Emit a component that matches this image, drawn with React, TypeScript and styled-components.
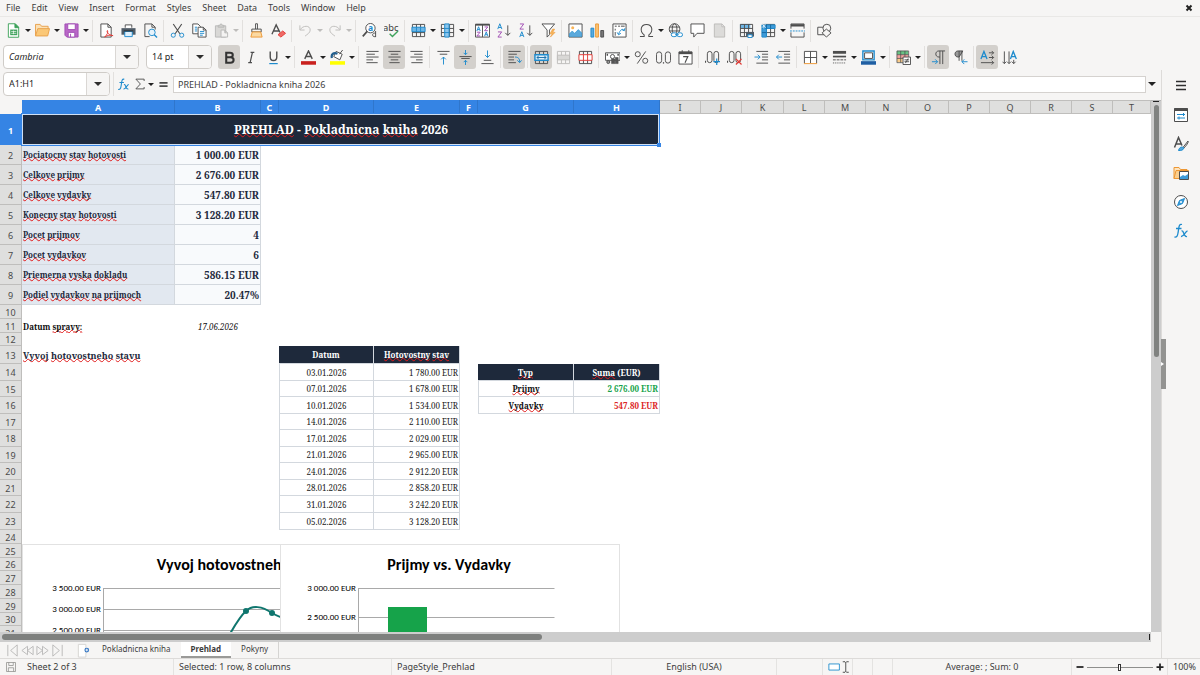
import React, { useState } from "react";
import styled, { createGlobalStyle, css } from "styled-components";

const ui = `"Noto Sans", "Open Sans", sans-serif`;
const cellFont = `"Noto Serif", "DejaVu Serif Condensed", "DejaVu Serif", serif`;

const c = {
  chrome: "#f6f5f4",
  line: "#dddbd9",
  text: "#3d3d3d",
  ink: "#4d4d4d",
  blue: "#1e8bcd",
  select: "#3584e4",
  navy: "#1e293b",
  red: "#e23b36",
  green: "#3fa35c",
  orange: "#ed9733",
  purple: "#a04db3",
};

const GlobalStyle = createGlobalStyle`
  *, *::before, *::after { box-sizing: border-box; }
  html, body { margin: 0; background: ${c.chrome}; }
  body { font: 9px/12px ${ui}; color: ${c.text}; }
  button, input { font: inherit; color: inherit; }
`;

/* ---------- icons ---------- */

const gridLines = <path d="M1.5 1.5h13v13h-13z M1.5 5.8h13 M1.5 10.2h13 M5.8 1.5v13 M10.2 1.5v13" />;

const icons: Record<string, React.ReactNode> = {
  newDoc: (
    <g>
      <path d="M2.500 .8h7.500l3.500 3.500v10.900h-11z" fill="#fff" stroke={c.green} />
      <path d="M9.500 1v4h4z" fill={c.green} stroke={c.green} />
      <path d="M4.500 7h7.500v6H4.500z" fill={c.green} stroke="none" />
      <path d="M5.500 9h5.500M5.500 11h5.500M8 8v4" stroke="#fff" strokeWidth=".7" />
    </g>
  ),
  open: (
    <g stroke="#e8a04a">
      <path d="M.5 13.500V1.500h5l1.500 2h7v3" fill="#fbe0b4" />
      <path d="M.5 13.800l2.500-7.800h12.500l-2 7.800z" fill="#fbc877" />
    </g>
  ),
  save: (
    <g stroke={c.purple}>
      <path d="M1 1h14v14H3l-2-2z" fill="#b967c7" />
      <path d="M4 1h8v6H4z" fill="#fff" />
      <path d="M4.500 10h7v5h-7z" fill="#fff" />
      <path d="M7 11.500v3.500" />
    </g>
  ),
  pdf: (
    <g>
      <path d="M2 1h7.500l3.500 3.500v10.500H2z M9.500 1v3.500H13" fill="#fff" />
      <path d="M6 15c3-3 4-5 3-7-1.500 2 2 5 6 5.500-3-1-6-.5-9 1.500z" stroke={c.red} />
    </g>
  ),
  print: (
    <g>
      <path d="M4.500 5V2h7v3" fill="#fff" />
      <path d="M.5 5.500h15v7H.5z" fill="#4f5b66" stroke="none" />
      <path d="M4 9h8v5.500H4z" fill="#dfeffb" stroke={c.blue} />
      <path d="M3 8.500h10" stroke="#222" />
    </g>
  ),
  preview: (
    <g>
      <path d="M7 14.500H2V1h7.500L13 4.500V7 M9.500 1v3.500H13" />
      <circle cx="9.500" cy="10" r="3.500" stroke={c.blue} fill="#e7f3fb" />
      <path d="M12 12.500l3 3" stroke={c.blue} strokeWidth="1.400" />
    </g>
  ),
  cut: (
    <g>
      <path d="M3.500 1l7 10.500M12.500 1l-7 10.500" strokeWidth="1.200" />
      <circle cx="3.500" cy="13" r="2.200" stroke={c.blue} />
      <circle cx="12.500" cy="13" r="2.200" stroke={c.blue} />
    </g>
  ),
  copy: (
    <g>
      <path d="M.8 1h5.500l3 3v7.500H.8z" fill="#fff" />
      <path d="M3 4.500h2.500M3 6.500h2.500M3 8.500h2.500" stroke={c.blue} />
      <path d="M6.500 4.500h5.500l3 3v7.500H6.500z M12 4.500v3h3" fill="#fff" />
      <path d="M8.500 9h4.500M8.500 11h4.500M8.500 13h3" stroke={c.blue} />
    </g>
  ),
  paste: (
    <g stroke="#b9b9b7">
      <path d="M1.500 3h11v12h-11z" fill="#d9d8d6" />
      <path d="M4.500 4.500v-2h1.500l1-1.500h1l1 1.500h1.500v2z" fill="#cfcecc" />
      <path d="M7.500 7.500h4l3 3v4.500h-7z M11.500 7.500v3h3" fill="#f4f3f2" />
    </g>
  ),
  clone: (
    <g>
      <path d="M7 .8h2v6H7z" fill="#fff" />
      <path d="M3 6.500h10v3H3z" fill="#f6f5f4" />
      <path d="M3.500 9.500h9l1.500 5.500H2z" fill="#fbd9a2" stroke={c.orange} />
    </g>
  ),
  clear: (
    <g>
      <path d="M1 12L5.500 2l4 8M3 8.500h5.500" strokeWidth="1.400" />
      <path d="M7.500 12.500l5-4 3 2.500-5 4z" fill="#ef6a66" stroke={c.red} />
    </g>
  ),
  undo: <path d="M2 2.500v5h5 M2.500 7C5 2.500 13 2 13 7.500c0 3-3 4.500-5.500 6.500" stroke="#bebdbb" />,
  redo: <path d="M14 2.500v5H9 M13.500 7C11 2.500 3 2 3 7.500c0 3 3 4.500 5.500 6.500" stroke="#bebdbb" />,
  find: (
    <g>
      <circle cx="9" cy="5.500" r="5" fill="#fff" />
      <path d="M5.500 9L.8 14.200" strokeWidth="1.800" />
      <text x="6.300" y="8.500" fontSize="9" fontWeight="700" fill={c.blue} stroke="none">a</text>
      <path d="M14.500 8.500v6.500m0-4c-4-1.500-4.500 4.500 0 3.500" />
    </g>
  ),
  spell: (
    <g>
      <text x="-1" y="8" fontSize="10" fill="#3d3d3d" stroke="none">abc</text>
      <path d="M6 11.500l3 3 6-6" stroke={c.green} strokeWidth="1.500" />
    </g>
  ),
  row: (
    <g>
      {gridLines}
      <path d="M1 4.500h14v4.700H1z" fill="#6eb6e6" stroke={c.blue} />
      <path d="M5.800 4.500v4.700M10.200 4.500v4.700" stroke={c.blue} />
    </g>
  ),
  column: (
    <g>
      {gridLines}
      <path d="M5 1h4.700v14H5z" fill="#8cc6ec" stroke={c.blue} />
      <path d="M5 5.800h4.700M5 10.200h4.700" stroke={c.blue} />
    </g>
  ),
  sort: (
    <g>
      <path d="M.5 1.500h15v13.500H.5z M8 1.500v13.500" fill="#fff" />
      <path d="M.5 1.800h15" strokeWidth="2" />
      <path d="M2 8.500l1.800-4.500 1.800 4.500M2.700 7h2.200M10.200 14l1.800-4.500 1.800 4.500M11 12.500h2" stroke={c.blue} />
      <path d="M2 9.800h3.500L2 13.800h3.500M10.200 4.200h3.500l-3.500 4h3.500" stroke={c.purple} />
    </g>
  ),
  ascending: (
    <g>
      <path d="M.8 6.500L3 .8l2.200 5.700M1.600 4.800h2.800" stroke={c.blue} />
      <path d="M1 9.500h4l-4 5.500h4" stroke={c.purple} />
      <path d="M11.500 2.500v10.500M8.800 10.500l2.700 2.700 2.700-2.700" />
    </g>
  ),
  descending: (
    <g>
      <path d="M1 1h4L1 6.500h4" stroke={c.purple} />
      <path d="M.8 15L3 9.300 5.200 15M1.600 13.200h2.800" stroke={c.blue} />
      <path d="M11.500 2.500v10.500M8.800 10.500l2.700 2.700 2.700-2.700" />
    </g>
  ),
  filter: (
    <g>
      <path d="M1 1h13.500L9 7.500v5L6.500 15V7.500z" fill="#fff" />
      <path d="M12.500 6.500l-3 5h2.500l-2 3.500 5-5h-2.500l2-3.500z" fill="#f7b65c" stroke={c.orange} strokeWidth=".6" />
    </g>
  ),
  image: (
    <g>
      <path d="M1 1h14v14H1z" fill="#fff" />
      <circle cx="5" cy="5" r="1.600" fill="#f9b457" stroke="none" />
      <path d="M1.500 14.500v-3l3-3 2.500 2.500L11 7l3.500 3.500v4z" fill="#5aa9dc" stroke={c.blue} strokeWidth=".6" />
    </g>
  ),
  chart: (
    <g>
      <path d="M1 5.500h3v9.500H1z" fill="#5aa9dc" stroke={c.blue} />
      <path d="M6 1h3v14H6z" fill="#f9c476" stroke={c.orange} />
      <path d="M11.500 8h3v7h-3z" fill="#777" />
    </g>
  ),
  pivot: (
    <g>
      <path d="M1 1h14v14H1z" fill="#fff" />
      <path d="M3 3.500h2M6.500 3.500h2M9.500 3.500h4M3.500 6v2M3.500 9.500v4" stroke="#8a8a8a" strokeWidth="1.500" />
      <path d="M13 8C12 6 9 6 7 12M10.500 7L13 8.300 13.800 5.500M5.500 10L7 12.500 9.500 11" stroke={c.blue} />
    </g>
  ),
  omega: <path d="M1 14.500h4.500v-1.800C.5 9 1.500 1.500 8 1.500s7.500 7.500 2.500 11.200v1.800H15" strokeWidth="1.100" />,
  link: (
    <g>
      <circle cx="7" cy="6.500" r="5.700" />
      <ellipse cx="7" cy="6.500" rx="2.500" ry="5.700" />
      <path d="M2 4.300h10M1.500 8.500h11" />
      <rect x="3.500" y="10.500" width="6" height="4" rx="2" stroke={c.blue} fill="#fff" />
      <rect x="9.500" y="10.500" width="6" height="4" rx="2" stroke={c.blue} fill="#fff" />
      <path d="M7.500 12.500h4" stroke={c.blue} />
    </g>
  ),
  comment: <path d="M1 1h14v10H7.500L4 15v-4H1z" fill="#fff" />,
  headers: <path d="M2.500 1h8l3 3v11h-11z M10.500 1v3h3" fill="#dcdbd9" stroke="#bcbbb9" />,
  printArea: (
    <g>
      <path d="M1 1h11v5H1z" fill="#6eb6e6" stroke="none" />
      {gridLines}
      <path d="M7.500 9.500h8.500v5H7.500z" fill="#4f5b66" stroke="none" />
      <path d="M9.500 12.500h4.500v3H9.500z" fill="#fff" stroke={c.blue} />
    </g>
  ),
  freeze: (
    <g>
      {gridLines}
      <path d="M1 2h14v3.800H1z M1 5.800h4.800V15H1z" fill="#3f9bd8" stroke={c.blue} />
      <path d="M5.800 2v4M10.200 2v4M1 10.200h4.800" stroke="#1666a0" />
      <path d="M1 1l4 4M5 1L1 5M3 0v6" stroke="#fff" strokeWidth=".7" />
    </g>
  ),
  split: (
    <g>
      <path d="M1 6V1h14v5M1 10v5h14v-5" />
      <path d="M1 2.500h14" strokeWidth="2.500" />
      <path d="M0 8.500h16" stroke={c.blue} strokeDasharray="2 1" />
    </g>
  ),
  shapes: (
    <g>
      <path d="M.8 4.500h8v8h-8z" />
      <circle cx="10.500" cy="5.500" r="4.200" fill="#f6f5f4" />
      <path d="M10 6.500l5 4-5 4.500-4.500-4.500z" fill="#f6f5f4" />
    </g>
  ),
  bold: <path d="M4.500 3h4c4 0 4 4.800 0 4.800h-4zM4.500 7.800h4.500c4.500 0 4.500 5.700 0 5.700H4.500z" stroke="#333" strokeWidth="2.200" />,
  italic: <path d="M7 2.500h4M4.500 13.500h4M9 2.500L6.500 13.500" strokeWidth="1.300" />,
  underline: (
    <g>
      <path d="M4.500 1.500v6c0 5 7 5 7 0v-6" strokeWidth="1.500" />
      <path d="M3.500 14.500h9" stroke={c.blue} strokeWidth="1.300" />
    </g>
  ),
  fontColor: (
    <g>
      <path d="M4 9.500L8 1l4 8.500M5.500 7h5" strokeWidth="1.500" />
      <path d="M0 13.800h16" stroke="#c9211e" strokeWidth="3.800" />
    </g>
  ),
  fill: (
    <g>
      <path d="M6.500 1.500l6.500 3-2.500 6-6.500-3.500z" fill="#fff" />
      <path d="M2 8.500C1 4 4 2.500 8 4" stroke="#235f8e" strokeWidth="2.400" />
      <path d="M13.500 0L10 4.500" />
      <path d="M0 13.800h16" stroke="#ffff00" strokeWidth="3.800" />
    </g>
  ),
  left: <path d="M1.500 1.500h13M1.500 4.500h9M1.500 7.500h13M1.500 10.500h7M1.500 13.500h12" />,
  center: <path d="M1.500 1.500h13M4 4.500h8M1.500 7.500h13M4 10.500h8M2.500 13.500h11" />,
  right: <path d="M1.500 1.500h13M5.500 4.500h9M1.500 7.500h13M7.500 10.500h7M2.500 13.500h12" />,
  top: (
    <g>
      <path d="M1.500 1.500h13M4 4.500h8" />
      <path d="M8 15.500v-8M5.500 10L8 7.500l2.500 2.500" stroke={c.blue} />
    </g>
  ),
  middle: (
    <g>
      <path d="M1.500 7h13M3.500 9h9" />
      <path d="M8 0v5M6 3l2 2 2-2M8 16v-5M6 13l2-2 2 2" stroke={c.blue} />
    </g>
  ),
  bottom: (
    <g>
      <path d="M1.500 14.500h13M4 11h8" />
      <path d="M8 .5v7.500M5.500 5.500L8 8l2.500-2.500" stroke={c.blue} />
    </g>
  ),
  wrap: (
    <g>
      <path d="M1.500 1.500h13M1.500 4.500h9M1.500 7.500h6M1.500 10.500h6M1.500 13.500h8" />
      <path d="M8.500 7.500c4 0 5 2 5 5.500M11 11l2.500 2.500L15.500 11" stroke={c.blue} />
    </g>
  ),
  merge: (
    <g>
      {gridLines}
      <path d="M1 5h14v6H1z" fill="#dff0fb" stroke={c.blue} strokeWidth="1.500" />
      <path d="M3 8h10M5 6.500L3 8l2 1.500M11 6.500L13 8l-2 1.500" stroke="#1a6ea6" />
    </g>
  ),
  merge2: (
    <g stroke="#bebdbb">
      <path d="M1.500 1.500h13v13h-13z M5.800 1.500v4M10.200 1.500v4M5.800 10.500v4M10.200 10.500v4" />
      <path d="M1.500 5.500h13v5h-13z" fill="#d9d8d6" />
    </g>
  ),
  unmerge: (
    <g>
      {gridLines}
      <path d="M1 5h14v6H1z M5.800 5v6M10.200 5v6" fill="#fff" stroke={c.red} />
    </g>
  ),
  currency: (
    <g>
      <path d="M.5 3h15.500v8H.5z" fill="#fff" />
      <circle cx="8" cy="7" r="2.200" />
      <path d="M2.500 4v2M14 4v2" strokeWidth="1.500" />
      <path d="M7 9.500h3.500v5H7z M11 8h3v6.500h-3z" fill="#555" strokeWidth=".6" />
      <circle cx="3.500" cy="12.800" r="1.600" fill="#999" />
    </g>
  ),
  percent: (
    <g>
      <circle cx="4" cy="4.500" r="2.700" />
      <circle cx="12" cy="11.500" r="2.700" />
      <path d="M12.500 1.500l-9 13" />
    </g>
  ),
  number: (
    <g>
      <rect x=".5" y="2" width="5.500" height="12" rx="2.700" />
      <rect x="10" y="2" width="5.500" height="12" rx="2.700" />
      <path d="M8 13v1.500" strokeWidth="1.300" />
    </g>
  ),
  date: (
    <g>
      <path d="M1 2h14v13H1z" fill="#fff" />
      <path d="M1 3.200h14" strokeWidth="2.500" />
      <path d="M4.500 .2v3M11.500 .2v3" />
      <path d="M5.500 7h5l-3 6.500" strokeWidth="1.200" />
    </g>
  ),
  addDecimal: (
    <g>
      <path d="M.5 11.500v2" strokeWidth="1.300" />
      <rect x="2.500" y="1.500" width="5" height="12" rx="2.500" />
      <rect x="9.500" y="1.500" width="5" height="12" rx="2.500" />
      <path d="M9 12.500h7M12.500 9v7" stroke={c.blue} strokeWidth="1.300" />
    </g>
  ),
  deleteDecimal: (
    <g>
      <path d="M.5 11.500v2" strokeWidth="1.300" />
      <rect x="2.500" y="1.500" width="5" height="12" rx="2.500" />
      <rect x="9.500" y="1.500" width="5" height="12" rx="2.500" />
      <path d="M9.500 9.500l6 6M15.500 9.500l-6 6" stroke={c.red} strokeWidth="1.300" />
    </g>
  ),
  indent: (
    <g>
      <path d="M2.500 1.500h12.500M8.500 4.500h6.500M8.500 7.500h6.500M8.500 10.500h6.500M2.500 14h12.500" />
      <path d="M.5 7.500h6M4 5l2.500 2.500L4 10" stroke={c.blue} />
    </g>
  ),
  outdent: (
    <g>
      <path d="M2.500 1.500h12.500M8.500 4.500h6.500M8.500 7.500h6.500M8.500 10.500h6.500M2.500 14h12.500" />
      <path d="M.5 7.500h6M3 5L.5 7.500 3 10" stroke={c.blue} />
    </g>
  ),
  borders: (
    <g>
      <path d="M1.500 14V1.500h13V14M8 1.500V14M1.500 8h13" fill="#fff" />
      <path d="M1 14.500h14" stroke={c.orange} />
    </g>
  ),
  borderStyle: (
    <g>
      <path d="M1 2.500h14" strokeWidth="3" />
      <path d="M1 7h14" strokeWidth="1.800" />
      <path d="M1 10.500h14" strokeDasharray="3 1" />
      <path d="M1 13.800h14" strokeDasharray="1 1" />
    </g>
  ),
  borderColor: (
    <g>
      <path d="M2 1h12v9.500H2z" fill="#fff" stroke={c.blue} strokeWidth="1.500" />
      <path d="M3.800 3h8.500v6H3.800z" />
      <path d="M0 13.800h16" stroke="#1f5fa3" strokeWidth="3.800" />
    </g>
  ),
  conditional: (
    <g>
      <path d="M1 1h12v4H1z" fill="#67c283" stroke="none" />
      <path d="M1 5h12v4H1z" fill="#f4a3a0" stroke="none" />
      <path d="M1 9h6v4H1z" fill="#fbcd8a" stroke="none" />
      <path d="M1 1h12.500v12.500H1z M5 1v12.500M9.500 1v12.500M1 5h12.500M1 9h12.500" strokeWidth=".8" />
      <path d="M7.500 7.500h8v8h-8z" fill="#fff" />
      <path d="M9 10.500h5M9 12.500h5M13 9l-3 5" />
    </g>
  ),
  ltr: (
    <g>
      <path d="M15 1H8.500c-4.500 0-4.500 6.500 0 6.500h1" />
      <path d="M9.500 1v14M12.500 1v14" />
      <path d="M1 12.500h6M4.500 10L7 12.500 4.500 15" stroke={c.blue} />
    </g>
  ),
  rtl: (
    <g>
      <path d="M10.500 1H5.500c-4.500 0-4.500 6.500 0 6.500h1z" fill="#999" />
      <path d="M6.500 1v10.500M9.500 1v10.500" />
      <path d="M15.500 12.500h-6M12 10l-2.500 2.500L12 15" stroke={c.blue} />
    </g>
  ),
  textHorizontal: (
    <g>
      <path d="M1 9.500L4.200 1.500 7.500 9.500M2.500 7h3.500" stroke={c.blue} strokeWidth="1.400" />
      <path d="M9.500 3h5M9.500 8h5M1 13.500h13.500M12.500 1l2 2-2 2M12.500 6l2 2-2 2M12.500 11.500l2 2-2 2" />
    </g>
  ),
  textVertical: (
    <g>
      <path d="M9 9.500L12 1.500l3.300 8M10.300 7h3.500" stroke={c.blue} strokeWidth="1.400" />
      <path d="M2.500 1.500v13M7.500 1.500v13M12.500 10.500v4M.5 12.500l2 2 2-2M5.500 12.500l2 2 2-2M10.500 12.500l2 2 2-2" />
    </g>
  ),
  properties: (
    <g>
      <path d="M1.500 1.500h13v13h-13z" fill="#fff" />
      <path d="M1.500 2.500h13" strokeWidth="3" />
      <path d="M4 7.500h8M10.500 6v3" stroke={c.blue} />
      <path d="M4 11h8M6 9.500v3" stroke={c.blue} />
    </g>
  ),
  styles: (
    <g>
      <path d="M1.500 11.500L5.500 1.500l3.500 8M3 8h5" strokeWidth="1.500" />
      <path d="M15 5L10 11.500M15 5c1 1-2 5-4 7" />
      <path d="M5.500 14.500c1-4 4-4 5.500-2.500-1 2.500-3 2.500-5.500 2.500z" fill="#5aa9dc" stroke={c.blue} />
    </g>
  ),
  gallery: (
    <g>
      <path d="M1 13.500V2.500h5l1.500 2H14v2" fill="#fde3bd" stroke={c.orange} />
      <path d="M1 13.500l2-8h12.500l-1 8z" fill="#fbcf8f" stroke={c.orange} />
      <path d="M6.500 6.500h9v8h-9z" fill="#fff" />
      <path d="M7 14v-2l3-2 2 1 3-2v5z" fill="#3f9bd8" stroke="none" />
    </g>
  ),
  navigator: (
    <g>
      <circle cx="8" cy="8" r="6.500" fill="#fff" />
      <path d="M11.500 4.500L9.500 9.500l-5 2L6.500 6.500z" fill="#3f9bd8" stroke={c.blue} />
      <circle cx="8" cy="8" r="1" fill="#fff" stroke="none" />
    </g>
  ),
  fx: (
    <g stroke={c.blue} strokeWidth="1.300">
      <path d="M9 1.500C5.500 .5 6 5 5 10c-.4 2.500-1 4.500-3.500 4M3 5.500h5.500" />
      <path d="M8.500 8c2.500-1 2 6.500 5.500 5.500M14.500 8c-2 0-4 6-6.500 5.500" />
    </g>
  ),
  sigma: <path d="M13.500 4V1.500h-11l6 6.500-6 6.500h11V12" strokeWidth="1.200" />,
  equals: <path d="M3 6h10M3 10h10" strokeWidth="1.900" />,
  menu: <path d="M3 3.500h10M3 7.500h10M3 11.500h10" strokeWidth="1.500" stroke="#2e2e2e" />,
  close: <path d="M5.500 5.500l5 5M10.500 5.500l-5 5" strokeWidth="2" stroke="#222" />,
  disk: <path d="M2 2h12v12H2z M5 2v4h6V2 M4.500 14V9h7v5" stroke="#8d8d8b" />,
  addSheet: (
    <g>
      <path d="M2.500 1.500V15h8V1.500z" fill="#fff" stroke="#d5d4d2" />
      <circle cx="11.500" cy="7.500" r="2.500" fill="#2a6fc0" stroke="none" />
      <path d="M11.500 6v3M10 7.500h3" stroke="#fff" />
    </g>
  ),
  selectionMode: <path d="M1 4.500h12v7H1z" stroke={c.blue} fill="#fff" />,
  cursor: <path d="M1 1h3l1 1 1-1h3M1 15h3l1-1 1 1h3M5 2v12" stroke="#222" />,
  minus: <path d="M4 8h8" strokeWidth="2" stroke="#222" />,
  plus: <path d="M4 8h8M8 4v8" strokeWidth="2" stroke="#222" />,
  first: <path d="M3 2v12M13 2L6 8l7 6z" />,
  previous: <path d="M8 3.500L2 8l6 4.500zM14 3.500L8 8l6 4.500z" />,
  next: <path d="M2 3.500L8 8l-6 4.500zM8 3.500L14 8l-6 4.500z" />,
  last: <path d="M13 2v12M3 2l7 6-7 6z" />,
};

const Svg = styled.svg<{ $size: number }>`
  display: block;
  flex: none;
  width: ${(p) => p.$size}px;
  height: ${(p) => p.$size}px;
  fill: none;
  stroke: ${c.ink};
  stroke-width: 1;
`;

const Icon = ({ name, size = 15 }: { name: string; size?: number }) => (
  <Svg viewBox="0 0 16 16" $size={size} aria-hidden="true">
    {icons[name]}
  </Svg>
);

/* ---------- window chrome ---------- */

const Window = styled.div`
  display: flex;
  flex-direction: column;
  height: 100vh;
  overflow: hidden;
  background: ${c.chrome};
`;

const bareButton = css`
  padding: 0;
  border: 0;
  background: none;
`;

const MenuBar = styled.nav`
  display: flex;
  align-items: center;
  flex: none;
  gap: 11px;
  height: 17px;
  padding: 0 3px 0 6px;
  border-bottom: 1px solid #e9e8e6;
`;

const MenuItem = styled.button`
  ${bareButton}
  font-size: 9px;
  line-height: 16px;
`;

const CloseButton = styled.button`
  ${bareButton}
  margin-left: auto;
`;

const Toolbar = styled.div<{ $height: number }>`
  display: flex;
  align-items: center;
  flex: none;
  height: ${(p) => p.$height}px;
  padding: 0 2px;
`;

const ToolButton = styled.button<{ $on?: boolean }>`
  ${bareButton}
  display: flex;
  align-items: center;
  justify-content: center;
  flex: none;
  width: 22px;
  height: 24px;
  border-radius: 3px;
  background: ${(p) => (p.$on ? "#d3d0cc" : "transparent")};
`;

const DropButton = styled.button<{ $muted?: boolean }>`
  ${bareButton}
  display: flex;
  align-items: center;
  justify-content: center;
  flex: none;
  width: 7px;
  height: 22px;
  &::before {
    content: "";
    border: 3px solid transparent;
    border-top-color: ${(p) => (p.$muted ? "#bebdbb" : "#222")};
    border-bottom: 0;
  }
`;

const Separator = styled.span<{ $wide?: boolean }>`
  flex: none;
  width: 1px;
  height: 22px;
  margin: 0 2px 0 ${(p) => (p.$wide ? 3 : 2)}px;
  background: #e2e0de;
`;

const Combo = styled.div<{ $width: number }>`
  display: flex;
  flex: none;
  width: ${(p) => p.$width}px;
  height: 24px;
  overflow: hidden;
  border: 1px solid #cfccc8;
  border-radius: 4px;
  background: #fff;
`;

const ComboInput = styled.input<{ $italic?: boolean }>`
  flex: 1;
  min-width: 0;
  padding: 0 5px;
  border: 0;
  outline: 0;
  background: none;
  color: #1f1f1f;
  font-size: 9px;
  font-style: ${(p) => (p.$italic ? "italic" : "normal")};
`;

const ComboArrow = styled.button`
  ${bareButton}
  display: flex;
  align-items: center;
  justify-content: center;
  width: 23px;
  border-left: 1px solid #dad7d4;
  background: ${c.chrome};
  &::before {
    content: "";
    border: 4px solid transparent;
    border-top-color: #2e2e2e;
    border-bottom: 0;
  }
`;

const FormatBar = styled(Toolbar)`
  padding: 0 3px;
`;

const ComboGroup = styled.div`
  display: flex;
  gap: 7px;
  margin-right: 6px;
`;

const Body = styled.div`
  display: flex;
  flex: 1;
  min-height: 0;
`;

const Main = styled.main`
  display: flex;
  flex-direction: column;
  flex: 1;
  min-width: 0;
`;

const FormulaBar = styled.div`
  display: flex;
  align-items: center;
  flex: none;
  height: 30px;
  padding: 0 3px 2px;
`;

const FormulaInput = styled.input`
  flex: 1;
  min-width: 0;
  height: 17px;
  margin: 0;
  padding: 0 4px;
  border: 1px solid #d5d2cf;
  outline: 0;
  background: #fff;
  font-size: 9px;
`;

const FormulaTools = styled.div`
  display: flex;
  align-items: center;
  margin-left: 3px;
  border-left: 1px solid #e2e0de;
`;

const FormulaButton = styled(ToolButton)<{ $narrow?: boolean }>`
  width: ${(p) => (p.$narrow ? 14 : 19)}px;
`;

const ExpandButton = styled(DropButton)`
  width: 12px;
  &::before { border-width: 4px 4px 0; }
`;

/* ---------- sheet ---------- */

const SheetArea = styled.div`
  display: flex;
  flex: 1;
  min-height: 0;
`;

const Viewport = styled.div`
  position: relative;
  flex: 1;
  min-width: 0;
  overflow: hidden;
  background: #fff;
`;

const Grid = styled.table`
  width: 100%;
  table-layout: fixed;
  border-spacing: 0;
  border-collapse: separate;
`;

const Row = styled.tr<{ $height: number }>`
  height: ${(p) => p.$height}px;
`;

const Corner = styled.td`
  padding: 0;
  background: ${c.chrome};
`;

const Heading = styled.th<{ $on?: boolean; $row?: boolean }>`
  padding: ${(p) => (p.$row ? "1px 0 0" : 0)};
  border: 0 solid ${(p) => (p.$on ? "#2f76cc" : "#bfbebc")};
  border-right-width: 1px;
  border-bottom-width: ${(p) => (p.$on ? 0 : 1)}px;
  border-top-width: ${(p) => (p.$on || p.$row ? 0 : 1)}px;
  background: ${(p) => (p.$on ? c.select : "#dfdfde")};
  color: ${(p) => (p.$on ? "#fff" : "#4a4a4a")};
  font-size: 9px;
  font-weight: ${(p) => (p.$on ? 700 : 400)};
  line-height: 11px;
  text-align: center;
`;

type Kind =
  | "empty" | "title" | "label" | "value" | "note" | "date" | "section"
  | "head" | "day" | "amount" | "type" | "income" | "expense";

const box = css`
  border-right: 1px solid #d3d8de;
  border-bottom: 1px solid #d3d8de;
`;

const kinds: Record<Kind, ReturnType<typeof css> | string> = {
  empty: "",
  title: css`
    position: relative;
    overflow: visible;
    background: ${c.navy};
    color: #fff;
    font-size: 12px;
    font-weight: 700;
    text-align: center;
    &::before {
      content: "";
      position: absolute;
      inset: -1px 0 -1px -1px;
      border: 1px solid ${c.select};
      box-shadow: inset 0 0 0 1px #cfe0f5;
    }
    &::after {
      content: "";
      position: absolute;
      right: -1px;
      bottom: -2px;
      width: 4px;
      height: 4px;
      background: ${c.select};
    }
  `,
  label: css`
    ${box}
    background: #e2e8f0;
    color: ${c.navy};
    font-weight: 700;
  `,
  value: css`
    ${box}
    background: #f8fafc;
    color: ${c.navy};
    font-size: 10px;
    font-weight: 700;
    text-align: right;
  `,
  note: css`color: #111; font-weight: 700;`,
  date: css`color: #111; font-style: italic; text-align: center;`,
  section: css`color: ${c.navy}; font-size: 9px; font-weight: 700;`,
  head: css`
    ${box}
    background: ${c.navy};
    color: #fff;
    font-weight: 700;
    text-align: center;
  `,
  day: css`${box} border-left: 1px solid #d3d8de; text-align: center;`,
  amount: css`${box} text-align: right;`,
  type: css`${box} border-left: 1px solid #d3d8de; color: #111; font-weight: 700; text-align: center;`,
  income: css`${box} color: #16a34a; font-weight: 700; text-align: right;`,
  expense: css`${box} color: #dc2626; font-weight: 700; text-align: right;`,
};

const Cell = styled.td<{ $kind: Kind }>`
  padding: 1px 1px 0;
  overflow: hidden;
  color: #222;
  font-family: ${cellFont};
  font-size: 8px;
  line-height: 12px;
  white-space: nowrap;
  ${(p) => kinds[p.$kind]}
`;

const Misspelt = styled.span`
  text-decoration: underline wavy #e01b1b 1px;
  text-decoration-skip-ink: none;
  text-underline-offset: -1px;
`;

const known = /^([\d.,%\s-]+|EUR|\(EUR\)|Datum)$/;

const Words = ({ text }: { text: string }) => (
  <>
    {text.split(/(\s+)/).map((word, i) => {
      if (!word.trim() || known.test(word)) return <React.Fragment key={i}>{word}</React.Fragment>;
      return <Misspelt key={i}>{word}</Misspelt>;
    })}
  </>
);

const columns: [string, number | undefined][] = [
  ["A", 153], ["B", 86], ["C", 18], ["D", 95], ["E", 86], ["F", 18], ["G", 96], ["H", 86],
  ["I", 41], ["J", 41], ["K", 42], ["L", 41], ["M", 41], ["N", 41], ["O", 42], ["P", 41],
  ["Q", 41], ["R", 41], ["S", 41], ["T", undefined],
];

const rowHeights = [
  31, 20, 20, 20, 20, 20, 20, 20, 20, 14, 14, 13, 18, 17, 16, 17, 16, 17, 16, 17,
  16, 17, 17, 14, 14, 13, 14, 14, 14, 13, 14,
];

const cells: Record<string, [Kind, string]> = {
  A11: ["note", "Datum spravy:"],
  B11: ["date", "17.06.2026"],
  A13: ["section", "Vyvoj hotovostneho stavu"],
  D13: ["head", "Datum"],
  E13: ["head", "Hotovostny stav"],
  G14: ["head", "Typ"],
  H14: ["head", "Suma (EUR)"],
  G15: ["type", "Prijmy"],
  H15: ["income", "2 676.00 EUR"],
  G16: ["type", "Vydavky"],
  H16: ["expense", "547.80 EUR"],
};

[
  ["Pociatocny stav hotovosti", "1 000.00 EUR"],
  ["Celkove prijmy", "2 676.00 EUR"],
  ["Celkove vydavky", "547.80 EUR"],
  ["Konecny stav hotovosti", "3 128.20 EUR"],
  ["Pocet prijmov", "4"],
  ["Pocet vydavkov", "6"],
  ["Priemerna vyska dokladu", "586.15 EUR"],
  ["Podiel vydavkov na prijmoch", "20.47%"],
].forEach(([label, value], i) => {
  cells[`A${i + 2}`] = ["label", label];
  cells[`B${i + 2}`] = ["value", value];
});

[
  ["03.01.2026", "1 780.00 EUR"],
  ["07.01.2026", "1 678.00 EUR"],
  ["10.01.2026", "1 534.00 EUR"],
  ["14.01.2026", "2 110.00 EUR"],
  ["17.01.2026", "2 029.00 EUR"],
  ["21.01.2026", "2 965.00 EUR"],
  ["24.01.2026", "2 912.20 EUR"],
  ["28.01.2026", "2 858.20 EUR"],
  ["31.01.2026", "3 242.20 EUR"],
  ["05.02.2026", "3 128.20 EUR"],
].forEach(([day, amount], i) => {
  cells[`D${i + 14}`] = ["day", day];
  cells[`E${i + 14}`] = ["amount", amount];
});

const Sheet = () => (
  <Grid>
    <colgroup>
      <col width={22} />
      {columns.map(([name, width]) => <col key={name} width={width} />)}
    </colgroup>
    <thead>
      <Row $height={14}>
        <Corner />
        {columns.map(([name], i) => <Heading key={name} scope="col" $on={i < 8}>{name}</Heading>)}
      </Row>
    </thead>
    <tbody>
      {rowHeights.map((height, i) => {
        const n = i + 1;
        return (
          <Row key={n} $height={height}>
            <Heading scope="row" $row $on={n === 1}>{n}</Heading>
            {n === 1 && (
              <Cell $kind="title" colSpan={8}><Words text="PREHLAD - Pokladnicna kniha 2026" /></Cell>
            )}
            {columns.slice(n === 1 ? 8 : 0).map(([name]) => {
              const [kind, text] = cells[name + n] ?? ["empty", ""];
              return <Cell key={name} $kind={kind as Kind}><Words text={text} /></Cell>;
            })}
          </Row>
        );
      })}
    </tbody>
  </Grid>
);

/* Charts float over the cells, anchored at row 25. */
const ChartFrame = styled.svg<{ $left: number; $width: number }>`
  position: absolute;
  top: 444px;
  left: ${(p) => p.$left}px;
  width: ${(p) => p.$width}px;
  height: 240px;
  background: #fff;
  outline: 1px solid #e2e2e2;
  outline-offset: -1px;
`;

const ChartTitle = styled.text`
  font: 700 16px Carlito, Lato, sans-serif;
  text-anchor: middle;
  fill: #000;
`;

const AxisLabel = styled.text`
  font: 9px Carlito, Lato, sans-serif;
  text-anchor: end;
  fill: #000;
`;

const GridLine = styled.path`
  fill: none;
  stroke: #a9a9a9;
`;

const BalanceChart = () => (
  <ChartFrame $left={22} $width={434} role="img" aria-label="Vyvoj hotovostneho stavu">
    <ChartTitle x="221" y="26">Vyvoj hotovostneho stavu</ChartTitle>
    <GridLine d="M81.500 44v180M81.500 44.500h330M81.500 65.500h330M81.500 86.500h330M81.500 107.500h330" />
    <AxisLabel x="79" y="47">3 500.00 EUR</AxisLabel>
    <AxisLabel x="79" y="68">3 000.00 EUR</AxisLabel>
    <AxisLabel x="79" y="89">2 500.00 EUR</AxisLabel>
    <path d="M198 108C205 96 214 76 224 67C230 61 240 62 250 69C262 76 268 76 276 72" fill="none" stroke="#0f766e" strokeWidth="2" />
    <circle cx="224" cy="67" r="3" fill="#0f766e" />
    <circle cx="250" cy="69" r="3" fill="#0f766e" />
  </ChartFrame>
);

const CompareChart = () => (
  <ChartFrame $left={280} $width={340} role="img" aria-label="Prijmy vs. Vydavky">
    <ChartTitle x="169" y="26">Prijmy vs. Vydavky</ChartTitle>
    <GridLine d="M78.500 44v180M78.500 44.500h196M78.500 73.500h196M78.500 102.500h196" />
    <AxisLabel x="76" y="47">3 000.00 EUR</AxisLabel>
    <AxisLabel x="76" y="76">2 500.00 EUR</AxisLabel>
    <rect x="108" y="63" width="39" height="160" fill="#16a34a" />
  </ChartFrame>
);

const VScroll = styled.div`
  display: flex;
  flex-direction: column;
  align-items: center;
  flex: none;
  width: 10px;
  background: #cdcdcd;
  border-top: 1px solid #b5b5b5;
`;

const SplitMark = styled.span<{ $across?: boolean }>`
  flex: none;
  width: ${(p) => (p.$across ? 6 : 1)}px;
  height: ${(p) => (p.$across ? 1 : 6)}px;
  background: #222;
`;

const VThumb = styled.div`
  width: 5px;
  height: 47.5%;
  margin-top: 3px;
  border-radius: 3px;
  background: #808280;
`;

const HScroll = styled.div`
  display: flex;
  align-items: center;
  justify-content: space-between;
  flex: none;
  height: 10px;
  margin-right: 10px;
  padding: 0 1px 0 2px;
  background: #cdcdcd;
`;

const HThumb = styled.div`
  width: 47%;
  height: 6px;
  border-radius: 3px;
  background: #7e807e;
`;

const SheetTabs = styled.div`
  display: flex;
  align-items: center;
  flex: none;
  height: 16px;
  padding-left: 5px;
`;

const TabArrows = styled.div`
  display: flex;
  margin-right: 11px;
  opacity: 0.35;
`;

const PlainButton = styled.button`
  ${bareButton}
`;

const Tab = styled.button<{ $on?: boolean }>`
  ${bareButton}
  height: 16px;
  padding: 0 10px;
  border-bottom: 2px solid ${(p) => (p.$on ? "#9a9a98" : "transparent")};
  background: ${(p) => (p.$on ? "#fff" : "none")};
  font-size: 8px;
  font-weight: ${(p) => (p.$on ? 700 : 400)};
  line-height: 14px;
`;

const TabList = styled.div`
  display: flex;
  margin-left: 1px;
  border-right: 1px solid #d5d4d2;
`;

/* ---------- side bar ---------- */

const Sidebar = styled.aside`
  position: relative;
  display: flex;
  flex-direction: column;
  align-items: center;
  flex: none;
  gap: 13px;
  width: 39px;
  padding: 8px 0 0;
  border-left: 1px solid ${c.line};
`;

const SideButton = styled.button`
  ${bareButton}
  width: 16px;
  height: 16px;
`;

const SideHandle = styled.button`
  ${bareButton}
  position: absolute;
  top: 269px;
  left: -1px;
  width: 5px;
  height: 50px;
  background: #939391;
  &::before {
    content: "";
    display: block;
    width: 0;
    border: 2px solid transparent;
    border-left: 3px solid #fff;
  }
`;

/* ---------- status bar ---------- */

const StatusBar = styled.footer`
  display: grid;
  grid-template-columns: 173fr 218fr 220fr 165fr 46fr 30fr 20fr 20fr 179fr 96fr 33fr;
  flex: none;
  height: 17px;
  border-top: 1px solid ${c.line};
`;

const Status = styled.div<{ $center?: boolean }>`
  display: flex;
  align-items: center;
  justify-content: ${(p) => (p.$center ? "center" : "flex-start")};
  min-width: 0;
  padding-left: ${(p) => (p.$center ? 0 : 5)}px;
  white-space: nowrap;
  border-left: 1px solid #e4e3e1;
  &:first-child { border-left: 0; gap: 10px; }
`;

const Zoom = styled.input`
  appearance: none;
  width: 66px;
  height: 10px;
  margin: 0;
  background: linear-gradient(#8f8f8d, #8f8f8d) center / 100% 1px no-repeat;
  &::-webkit-slider-thumb {
    appearance: none;
    width: 3px;
    height: 7px;
    border: 1px solid #333;
    background: #fff;
  }
`;

/* ---------- tool lists ---------- */

type Tool = { icon?: string; label?: string; drop?: boolean; on?: boolean; muted?: boolean };
const t = (icon: string, label: string, rest: Partial<Tool> = {}): Tool => ({ icon, label, ...rest });
const sep: Tool = {};
const drop = { drop: true };
const on = { on: true };

const standard: Tool[] = [
  t("newDoc", "New", drop), t("open", "Open", drop), t("save", "Save", drop), sep,
  t("pdf", "Export as PDF"), t("print", "Print"), t("preview", "Print preview"), sep,
  t("cut", "Cut"), t("copy", "Copy"), t("paste", "Paste", { drop: true, muted: true }), sep,
  t("clone", "Clone formatting"), t("clear", "Clear formatting"), sep,
  t("undo", "Undo", { drop: true, muted: true }), t("redo", "Redo", { drop: true, muted: true }), sep,
  t("find", "Find and replace"), t("spell", "Spelling"), sep,
  t("row", "Row", drop), t("column", "Column", drop), sep,
  t("sort", "Sort"), t("ascending", "Sort ascending"), t("descending", "Sort descending"), t("filter", "AutoFilter"), sep,
  t("image", "Image"), t("chart", "Chart"), t("pivot", "Pivot table"), sep,
  t("omega", "Special character", drop), t("link", "Hyperlink"), t("comment", "Comment"), t("headers", "Headers and footers"), sep,
  t("printArea", "Print area"), t("freeze", "Freeze", drop), t("split", "Split window"), sep,
  t("shapes", "Draw functions"),
];

const formatting: Tool[] = [
  t("bold", "Bold", on), t("italic", "Italic"), t("underline", "Underline", drop), sep,
  t("fontColor", "Font color", drop), t("fill", "Background color", drop), sep,
  t("left", "Align left"), t("center", "Center", on), t("right", "Align right"), sep,
  t("top", "Align top"), t("middle", "Center vertically", on), t("bottom", "Align bottom"), sep,
  t("wrap", "Wrap text", on), sep,
  t("merge", "Merge and center", on), t("merge2", "Merge cells"), t("unmerge", "Unmerge cells"), sep,
  t("currency", "Currency", drop), t("percent", "Percent"), t("number", "Number"), t("date", "Date"), sep,
  t("addDecimal", "Add decimal place"), t("deleteDecimal", "Delete decimal place"), sep,
  t("indent", "Increase indent"), t("outdent", "Decrease indent"), sep,
  t("borders", "Borders", drop), t("borderStyle", "Border style", drop), t("borderColor", "Border color", drop), sep,
  t("conditional", "Conditional", drop), sep,
  t("ltr", "Left to right", on), t("rtl", "Right to left"), sep,
  t("textHorizontal", "Text direction horizontal", on), t("textVertical", "Text direction vertical"),
];

const Tools = ({ items }: { items: Tool[] }) => (
  <>
    {items.map((item, i) =>
      item.icon ? (
        <React.Fragment key={i}>
          <ToolButton $on={item.on} aria-label={item.label} aria-pressed={item.on}>
            <Icon name={item.icon} />
          </ToolButton>
          {item.drop && <DropButton $muted={item.muted} aria-label={`${item.label} options`} />}
        </React.Fragment>
      ) : (
        <Separator key={i} $wide={items[i - 1].drop} />
      )
    )}
  </>
);

const menus = ["File", "Edit", "View", "Insert", "Format", "Styles", "Sheet", "Data", "Tools", "Window", "Help"];
const tabs = ["Pokladnicna kniha", "Prehlad", "Pokyny"];

export default function App() {
  const [tab, setTab] = useState("Prehlad");
  return (
    <Window>
      <GlobalStyle />
      <MenuBar>
        {menus.map((name) => <MenuItem key={name}>{name}</MenuItem>)}
        <CloseButton aria-label="Close document"><Icon name="close" size={16} /></CloseButton>
      </MenuBar>
      <Toolbar $height={27}><Tools items={standard} /></Toolbar>
      <FormatBar $height={26}>
        <ComboGroup>
          <Combo $width={136}>
            <ComboInput $italic aria-label="Font name" defaultValue="Cambria" />
            <ComboArrow aria-label="Font list" />
          </Combo>
          <Combo $width={66}>
            <ComboInput aria-label="Font size" defaultValue="14 pt" />
            <ComboArrow aria-label="Size list" />
          </Combo>
        </ComboGroup>
        <Tools items={formatting} />
      </FormatBar>
      <Body>
        <Main>
          <FormulaBar>
            <Combo $width={107}>
              <ComboInput aria-label="Name box" defaultValue="A1:H1" />
              <ComboArrow aria-label="Named ranges" />
            </Combo>
            <FormulaTools>
              <FormulaButton aria-label="Function wizard"><Icon name="fx" size={13} /></FormulaButton>
              <FormulaButton $narrow aria-label="Select function"><Icon name="sigma" size={12} /></FormulaButton>
              <DropButton aria-label="Function options" />
              <FormulaButton aria-label="Formula"><Icon name="equals" size={13} /></FormulaButton>
            </FormulaTools>
            <FormulaInput aria-label="Formula line" defaultValue="PREHLAD - Pokladnicna kniha 2026" />
            <ExpandButton aria-label="Expand formula bar" />
          </FormulaBar>
          <SheetArea>
            <Viewport>
              <Sheet />
              <BalanceChart />
              <CompareChart />
            </Viewport>
            <VScroll><SplitMark $across /><VThumb /></VScroll>
          </SheetArea>
          <HScroll><HThumb /><SplitMark /></HScroll>
          <SheetTabs>
            <TabArrows>
              {["first", "previous", "next", "last"].map((name) => (
                <PlainButton key={name} aria-label={`${name} sheet`}><Icon name={name} /></PlainButton>
              ))}
            </TabArrows>
            <PlainButton aria-label="Add sheet"><Icon name="addSheet" /></PlainButton>
            <TabList>
              {tabs.map((name) => (
                <Tab key={name} $on={name === tab} onClick={() => setTab(name)}>{name}</Tab>
              ))}
            </TabList>
          </SheetTabs>
        </Main>
        <Sidebar>
          {["menu", "properties", "styles", "gallery", "navigator", "fx"].map((name) => (
            <SideButton key={name} aria-label={name}><Icon name={name} size={16} /></SideButton>
          ))}
          <SideHandle aria-label="Toggle side bar" />
        </Sidebar>
      </Body>
      <StatusBar>
        <Status><Icon name="disk" size={12} />Sheet 2 of 3</Status>
        <Status>Selected: 1 row, 8 columns</Status>
        <Status>PageStyle_Prehlad</Status>
        <Status $center>English (USA)</Status>
        <Status />
        <Status><Icon name="selectionMode" size={14} /><Icon name="cursor" size={12} /></Status>
        <Status />
        <Status />
        <Status $center>Average: ; Sum: 0</Status>
        <Status $center>
          <PlainButton aria-label="Zoom out"><Icon name="minus" size={14} /></PlainButton>
          <Zoom type="range" aria-label="Zoom" defaultValue={50} />
          <PlainButton aria-label="Zoom in"><Icon name="plus" size={14} /></PlainButton>
        </Status>
        <Status>100%</Status>
      </StatusBar>
    </Window>
  );
}
